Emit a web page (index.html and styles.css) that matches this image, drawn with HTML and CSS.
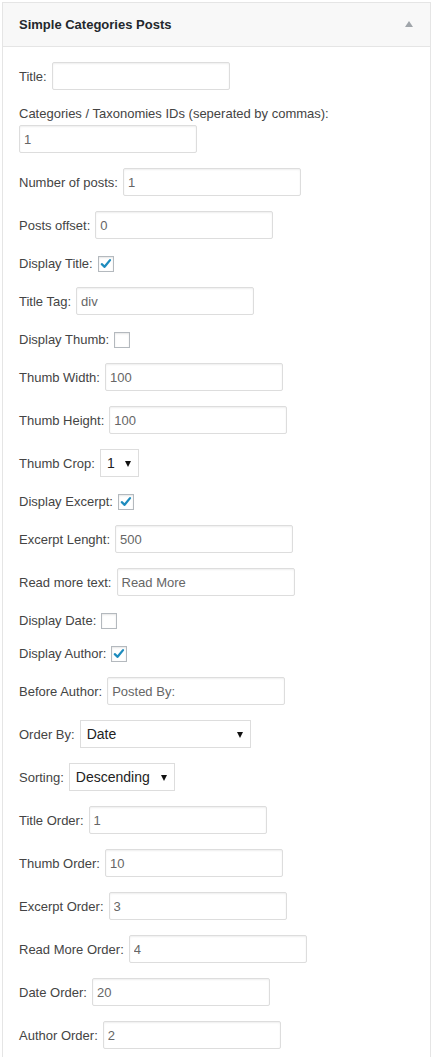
FILE: index.html
```html
<!DOCTYPE html>
<html>
<head>
<meta charset="utf-8">
<link rel="stylesheet" href="styles.css">
</head>
<body>
<div class="widget">
  <div class="widget-top">
    <h3 class="widget-title">Simple Categories Posts</h3>
    <span class="toggle"></span>
  </div>
  <form class="widget-inside">
    <div class="row"><label>Title:</label><input class="field" type="text" value=""></div>
    <div class="stack">
      <label class="block">Categories / Taxonomies IDs (seperated by commas):</label>
      <div class="row"><input class="field" type="text" value="1"></div>
    </div>
    <div class="row"><label>Number of posts:</label><input class="field" type="text" value="1"></div>
    <div class="row"><label>Posts offset:</label><input class="field" type="text" value="0"></div>
    <div class="row cb-row"><label>Display Title:</label><span class="cb checked"><svg viewBox="0 0 16 16" width="16" height="16"><path d="M3.2 8.2 L6.4 11.2 L12.6 3.6" fill="none" stroke="#1e8cbe" stroke-width="2.6" stroke-linecap="round" stroke-linejoin="round"/></svg></span></div>
    <div class="row"><label>Title Tag:</label><input class="field" type="text" value="div"></div>
    <div class="row cb-row"><label>Display Thumb:</label><span class="cb"></span></div>
    <div class="row"><label>Thumb Width:</label><input class="field" type="text" value="100"></div>
    <div class="row"><label>Thumb Height:</label><input class="field" type="text" value="100"></div>
    <div class="row"><label>Thumb Crop:</label><span class="select sel-crop">1</span></div>
    <div class="row cb-row"><label>Display Excerpt:</label><span class="cb checked"><svg viewBox="0 0 16 16" width="16" height="16"><path d="M3.2 8.2 L6.4 11.2 L12.6 3.6" fill="none" stroke="#1e8cbe" stroke-width="2.6" stroke-linecap="round" stroke-linejoin="round"/></svg></span></div>
    <div class="row"><label>Excerpt Lenght:</label><input class="field" type="text" value="500"></div>
    <div class="row"><label>Read more text:</label><input class="field" type="text" value="Read More"></div>
    <div class="row cb-row"><label>Display Date:</label><span class="cb"></span></div>
    <div class="row cb-row"><label>Display Author:</label><span class="cb checked"><svg viewBox="0 0 16 16" width="16" height="16"><path d="M3.2 8.2 L6.4 11.2 L12.6 3.6" fill="none" stroke="#1e8cbe" stroke-width="2.6" stroke-linecap="round" stroke-linejoin="round"/></svg></span></div>
    <div class="row"><label>Before Author:</label><input class="field" type="text" value="Posted By:"></div>
    <div class="row"><label>Order By:</label><span class="select sel-order">Date</span></div>
    <div class="row"><label>Sorting:</label><span class="select sel-sort">Descending</span></div>
    <div class="row"><label>Title Order:</label><input class="field" type="text" value="1"></div>
    <div class="row"><label>Thumb Order:</label><input class="field" type="text" value="10"></div>
    <div class="row"><label>Excerpt Order:</label><input class="field" type="text" value="3"></div>
    <div class="row"><label>Read More Order:</label><input class="field" type="text" value="4"></div>
    <div class="row"><label>Date Order:</label><input class="field" type="text" value="20"></div>
    <div class="row"><label>Author Order:</label><input class="field" type="text" value="2"></div>
  </form>
</div>
</body>
</html>
```
FILE: styles.css
```css
html, body {
  margin: 0;
  padding: 0;
  background: #fff;
}
body {
  font-family: "Liberation Sans", Arial, sans-serif;
  font-size: 13px;
  color: #444;
}
.widget {
  margin: 2px 0 0 2px;
  width: 427px;
  border: 1px solid #e5e5e5;
  border-bottom: none;
  background: #fff;
}
.widget-top {
  height: 43px;
  background: #f8f8f8;
  border-bottom: 1px solid #e5e5e5;
  display: flex;
  align-items: center;
  justify-content: space-between;
  padding: 0 17px 0 16px;
}
.widget-title {
  margin: 0;
  font-size: 13px;
  font-weight: bold;
  color: #23282d;
}
.toggle {
  width: 0;
  height: 0;
  border-left: 4px solid transparent;
  border-right: 4px solid transparent;
  border-bottom: 6px solid #a0a5aa;
  margin-top: -2px;
}
.widget-inside {
  padding: 14px 16px 20px 16px;
  display: flex;
  flex-direction: column;
  gap: 13px;
}
.row {
  display: flex;
  align-items: center;
  gap: 5px;
  height: 30px;
}
.row.cb-row {
  height: 20px;
}
.stack {
  display: flex;
  flex-direction: column;
}
label {
  white-space: nowrap;
}
label.block {
  line-height: 20px;
}
.field {
  box-sizing: border-box;
  width: 178px;
  height: 28px;
  margin: 0;
  padding: 3px 4px;
  border: 1px solid #ddd;
  border-radius: 2px;
  box-shadow: inset 0 1px 2px rgba(0,0,0,.07);
  background: #fff;
  font-family: "Liberation Sans", Arial, sans-serif;
  font-size: 13px;
  color: #666;
  outline: none;
}
.cb {
  box-sizing: border-box;
  width: 16px;
  height: 16px;
  border: 1px solid #b4b9be;
  background: #fff;
  box-shadow: inset 0 1px 2px rgba(0,0,0,.1);
  display: flex;
  align-items: center;
  justify-content: center;
  margin-top: 1px;
}
.cb svg {
  display: block;
}
.select {
  box-sizing: border-box;
  position: relative;
  height: 28px;
  border: 1px solid #ddd;
  background: #fff;
  font-size: 14px;
  color: #222;
  display: flex;
  align-items: center;
  padding-left: 6px;
}
.select::after {
  content: "";
  position: absolute;
  right: 7px;
  top: 11px;
  border-left: 3.5px solid transparent;
  border-right: 3.5px solid transparent;
  border-top: 6px solid #111;
}
.sel-crop { width: 39px; }
.sel-order { width: 171px; }
.sel-sort { width: 106px; }
```
